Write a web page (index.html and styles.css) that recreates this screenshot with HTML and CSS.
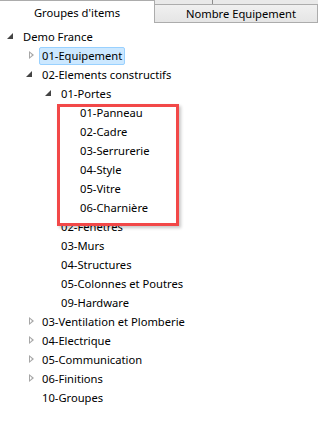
FILE: index.html
```html
<!DOCTYPE html>
<html>
    <head>
        <meta charset="UTF-8">
        <title>Groupes d'items</title>
        <link rel="stylesheet" href="styles.css">
    </head>
    <body>
        <div class="tabs">
            <div class="tab tab-active">Groupes d'items</div>
            <div class="tab-rest">
                <div class="tab-peek"><span class="peek-cell"></span></div>
                <div class="tab">Nombre Equipement</div>
            </div>
        </div>
        <ul class="tree">
            <li>
                <div class="row"><span class="toggle open"></span><span class="label">Demo France</span></div>
                <ul>
                    <li><div class="row"><span class="toggle closed"></span><span class="label selected">01-Equipement</span></div></li>
                    <li>
                        <div class="row"><span class="toggle open"></span><span class="label">02-Elements constructifs</span></div>
                        <ul>
                            <li>
                                <div class="row"><span class="toggle open"></span><span class="label">01-Portes</span></div>
                                <ul class="marked">
                                    <li><div class="row"><span class="toggle"></span><span class="label">01-Panneau</span></div></li>
                                    <li><div class="row"><span class="toggle"></span><span class="label">02-Cadre</span></div></li>
                                    <li><div class="row"><span class="toggle"></span><span class="label">03-Serrurerie</span></div></li>
                                    <li><div class="row"><span class="toggle"></span><span class="label">04-Style</span></div></li>
                                    <li><div class="row"><span class="toggle"></span><span class="label">05-Vitre</span></div></li>
                                    <li><div class="row"><span class="toggle"></span><span class="label">06-Charnière</span></div></li>
                                </ul>
                            </li>
                            <li><div class="row"><span class="toggle"></span><span class="label">02-Fenetres</span></div></li>
                            <li><div class="row"><span class="toggle"></span><span class="label">03-Murs</span></div></li>
                            <li><div class="row"><span class="toggle"></span><span class="label">04-Structures</span></div></li>
                            <li><div class="row"><span class="toggle"></span><span class="label">05-Colonnes et Poutres</span></div></li>
                            <li><div class="row"><span class="toggle"></span><span class="label">09-Hardware</span></div></li>
                        </ul>
                    </li>
                    <li><div class="row"><span class="toggle closed"></span><span class="label">03-Ventilation et Plomberie</span></div></li>
                    <li><div class="row"><span class="toggle closed"></span><span class="label">04-Electrique</span></div></li>
                    <li><div class="row"><span class="toggle closed"></span><span class="label">05-Communication</span></div></li>
                    <li><div class="row"><span class="toggle closed"></span><span class="label">06-Finitions</span></div></li>
                    <li><div class="row"><span class="toggle"></span><span class="label">10-Groupes</span></div></li>
                </ul>
            </li>
        </ul>
    </body>
</html>
```

FILE: styles.css
```css
* {
    padding: 0;
    margin: 0;
    box-sizing: border-box;
}

ul,
li {
    list-style: none;
}

body {
    width: 318px;
    height: 427px;
    background: #fff;
    font-family: "Noto Sans", "Open Sans", sans-serif;
    font-size: 11.2px;
    color: #000;
    overflow: hidden;
}

/* onglets */
.tabs {
    display: flex;
    align-items: flex-end;
}

.tab {
    height: 19px;
    line-height: 17px;
    text-align: center;
    border: 1px solid #acacac;
    border-left: none;
    background: linear-gradient(#f0f0f0, #e5e5e5);
}

.tab-active {
    width: 155px;
    height: 23px;
    line-height: 24px;
    border-bottom: none;
    background: #fff;
}

.tab-rest {
    flex: 1;
    display: flex;
    flex-direction: column;
}

.tab-rest .tab {
    padding-left: 10px;
}

.tab-peek {
    height: 4px;
    background: #e9e9e9;
}

.peek-cell {
    display: block;
    width: 58px;
    height: 4px;
    border-right: 1px solid #8c8c8c;
}

/* arbre */
.tree {
    padding: 4px 0 0 4px;
}

.tree ul {
    padding-left: 19px;
}

.row {
    display: flex;
    align-items: center;
    height: 19px;
}

.toggle {
    width: 16px;
    height: 19px;
    position: relative;
}

.toggle.closed::before {
    content: "";
    position: absolute;
    left: 6px;
    top: 5px;
    border-style: solid;
    border-width: 4px 0 4px 5px;
    border-color: transparent transparent transparent #a6a6a6;
}

.toggle.closed::after {
    content: "";
    position: absolute;
    left: 7px;
    top: 7px;
    border-style: solid;
    border-width: 2px 0 2px 2.5px;
    border-color: transparent transparent transparent #fff;
}

.toggle.open::before {
    content: "";
    position: absolute;
    left: 3px;
    top: 6px;
    border-style: solid;
    border-width: 0 0 6px 6px;
    border-color: transparent transparent #444 transparent;
}

.label {
    height: 18px;
    line-height: 16px;
    padding: 0 2px;
    border: 1px solid transparent;
    white-space: nowrap;
}

.label.selected {
    background: #cce8ff;
    border-color: #99d1ff;
    border-radius: 2px;
}

/* cadre rouge d'annotation */
.marked {
    position: relative;
}

.marked::after {
    content: "";
    position: absolute;
    left: 15px;
    top: 1px;
    width: 116px;
    height: 116px;
    border: 3px solid #f24848;
    box-shadow: 2px 2px 3px rgba(0, 0, 0, 0.22);
    pointer-events: none;
}
```
